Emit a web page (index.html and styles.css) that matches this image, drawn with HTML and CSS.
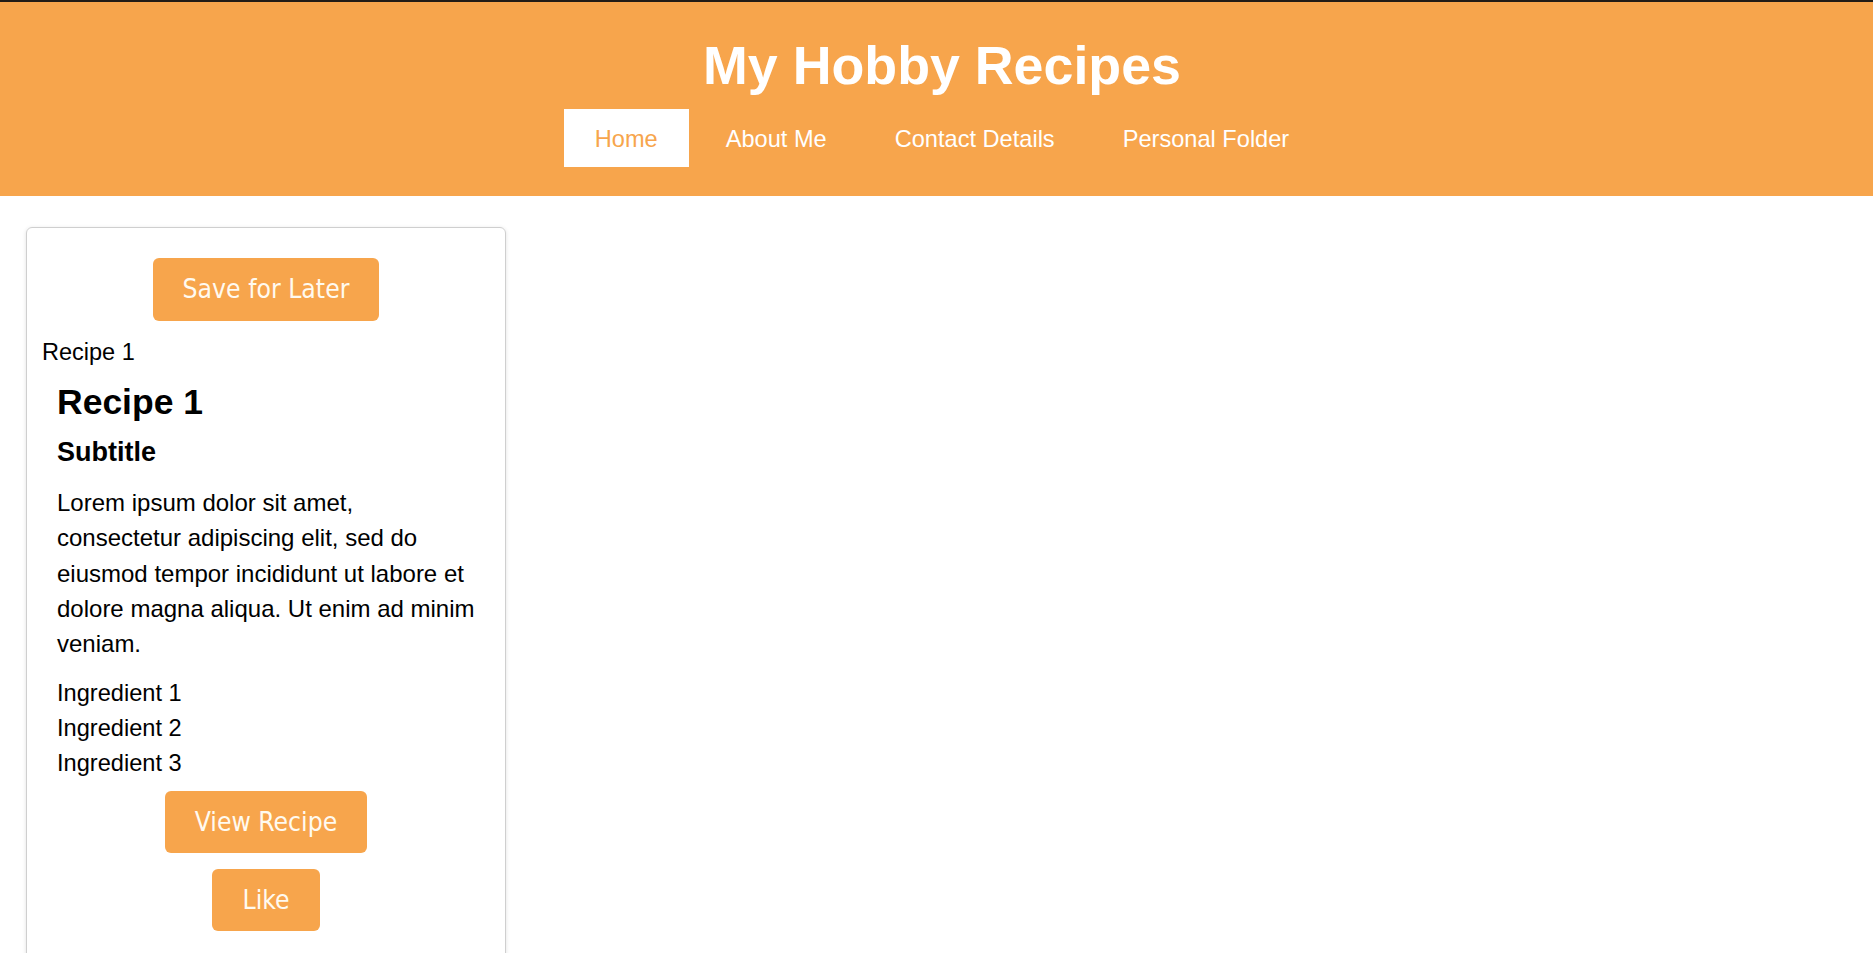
FILE: index.html
```html
<!DOCTYPE html>
<html lang="en">
<head>
<meta charset="utf-8">
<title>My Hobby Recipes</title>
<link rel="stylesheet" href="styles.css">
</head>
<body>
<header class="site-header">
  <h1 class="site-title">My Hobby Recipes</h1>
  <nav class="site-nav">
    <a class="nav-link active" href="#">Home</a>
    <a class="nav-link" href="#">About Me</a>
    <a class="nav-link" href="#">Contact Details</a>
    <a class="nav-link" href="#">Personal Folder</a>
  </nav>
</header>
<main class="content">
  <article class="card">
    <button class="btn btn-save" type="button">Save for Later</button>
    <div class="card-tag">Recipe 1</div>
    <div class="card-body">
      <h2 class="card-title">Recipe 1</h2>
      <h3 class="card-subtitle">Subtitle</h3>
      <p class="card-text">Lorem ipsum dolor sit amet, consectetur adipiscing elit, sed do eiusmod tempor incididunt ut labore et dolore magna aliqua. Ut enim ad minim veniam.</p>
      <ul class="ingredients">
        <li>Ingredient 1</li>
        <li>Ingredient 2</li>
        <li>Ingredient 3</li>
      </ul>
    </div>
    <button class="btn btn-view" type="button">View Recipe</button>
    <button class="btn btn-like" type="button">Like</button>
  </article>
</main>
</body>
</html>
```

FILE: styles.css
```css
* {
  box-sizing: border-box;
}

html, body {
  margin: 0;
  padding: 0;
  background: #ffffff;
}

body {
  font-family: "Liberation Sans", Arial, sans-serif;
  color: #000000;
  overflow: hidden;
}

.site-header {
  background: #f7a54c;
  border-top: 2px solid #221c16;
  padding: 32px 0 29px 11px;
  display: flex;
  flex-direction: column;
  align-items: center;
}

.site-title {
  margin: 0;
  font-size: 53.76px;
  line-height: 62px;
  font-weight: bold;
  color: #ffffff;
}

.site-nav {
  margin-top: 13px;
  display: flex;
  justify-content: center;
  gap: 6px;
}

.nav-link {
  display: block;
  padding: 17px 31px 15px;
  font-size: 23.6px;
  line-height: 26px;
  color: #ffffff;
  text-decoration: none;
}

.nav-link.active {
  background: #ffffff;
  color: #f7a54c;
}

.content {
  padding: 31px 26px 0;
}

.card {
  width: 480px;
  min-height: 760px;
  border: 1px solid #cfcfcf;
  border-radius: 6px;
  box-shadow: 0 1px 4px rgba(0, 0, 0, 0.12);
  padding: 30px 15px 20px;
  display: flex;
  flex-direction: column;
  align-items: center;
}

.btn {
  font-family: "DejaVu Sans Condensed", "DejaVu Sans", sans-serif;
  font-stretch: condensed;
  font-size: 26.3px;
  line-height: 32px;
  color: #fffaf0;
  background: #f7a54c;
  border: none;
  border-radius: 6px;
  padding: 15px 30px;
  cursor: pointer;
}

.btn-save {
  padding-bottom: 16px;
}

.btn-view {
  margin-top: 10px;
}

.btn-like {
  margin-top: 16px;
}

.card-tag {
  align-self: stretch;
  margin-top: 18px;
  font-size: 23.5px;
  line-height: 26px;
}

.card-body {
  align-self: stretch;
  padding: 0 10px 0 15px;
}

.card-title {
  margin: 17px 0 0;
  font-size: 35.5px;
  line-height: 40px;
  font-weight: bold;
}

.card-subtitle {
  margin: 15px 0 0;
  font-size: 27px;
  line-height: 30px;
  font-weight: bold;
}

.card-text {
  margin: 18px 0 0;
  font-size: 24px;
  line-height: 35.3px;
}

.ingredients {
  list-style: none;
  margin: 15px 0 0;
  padding: 0;
  font-size: 23.6px;
  line-height: 35px;
}
```
